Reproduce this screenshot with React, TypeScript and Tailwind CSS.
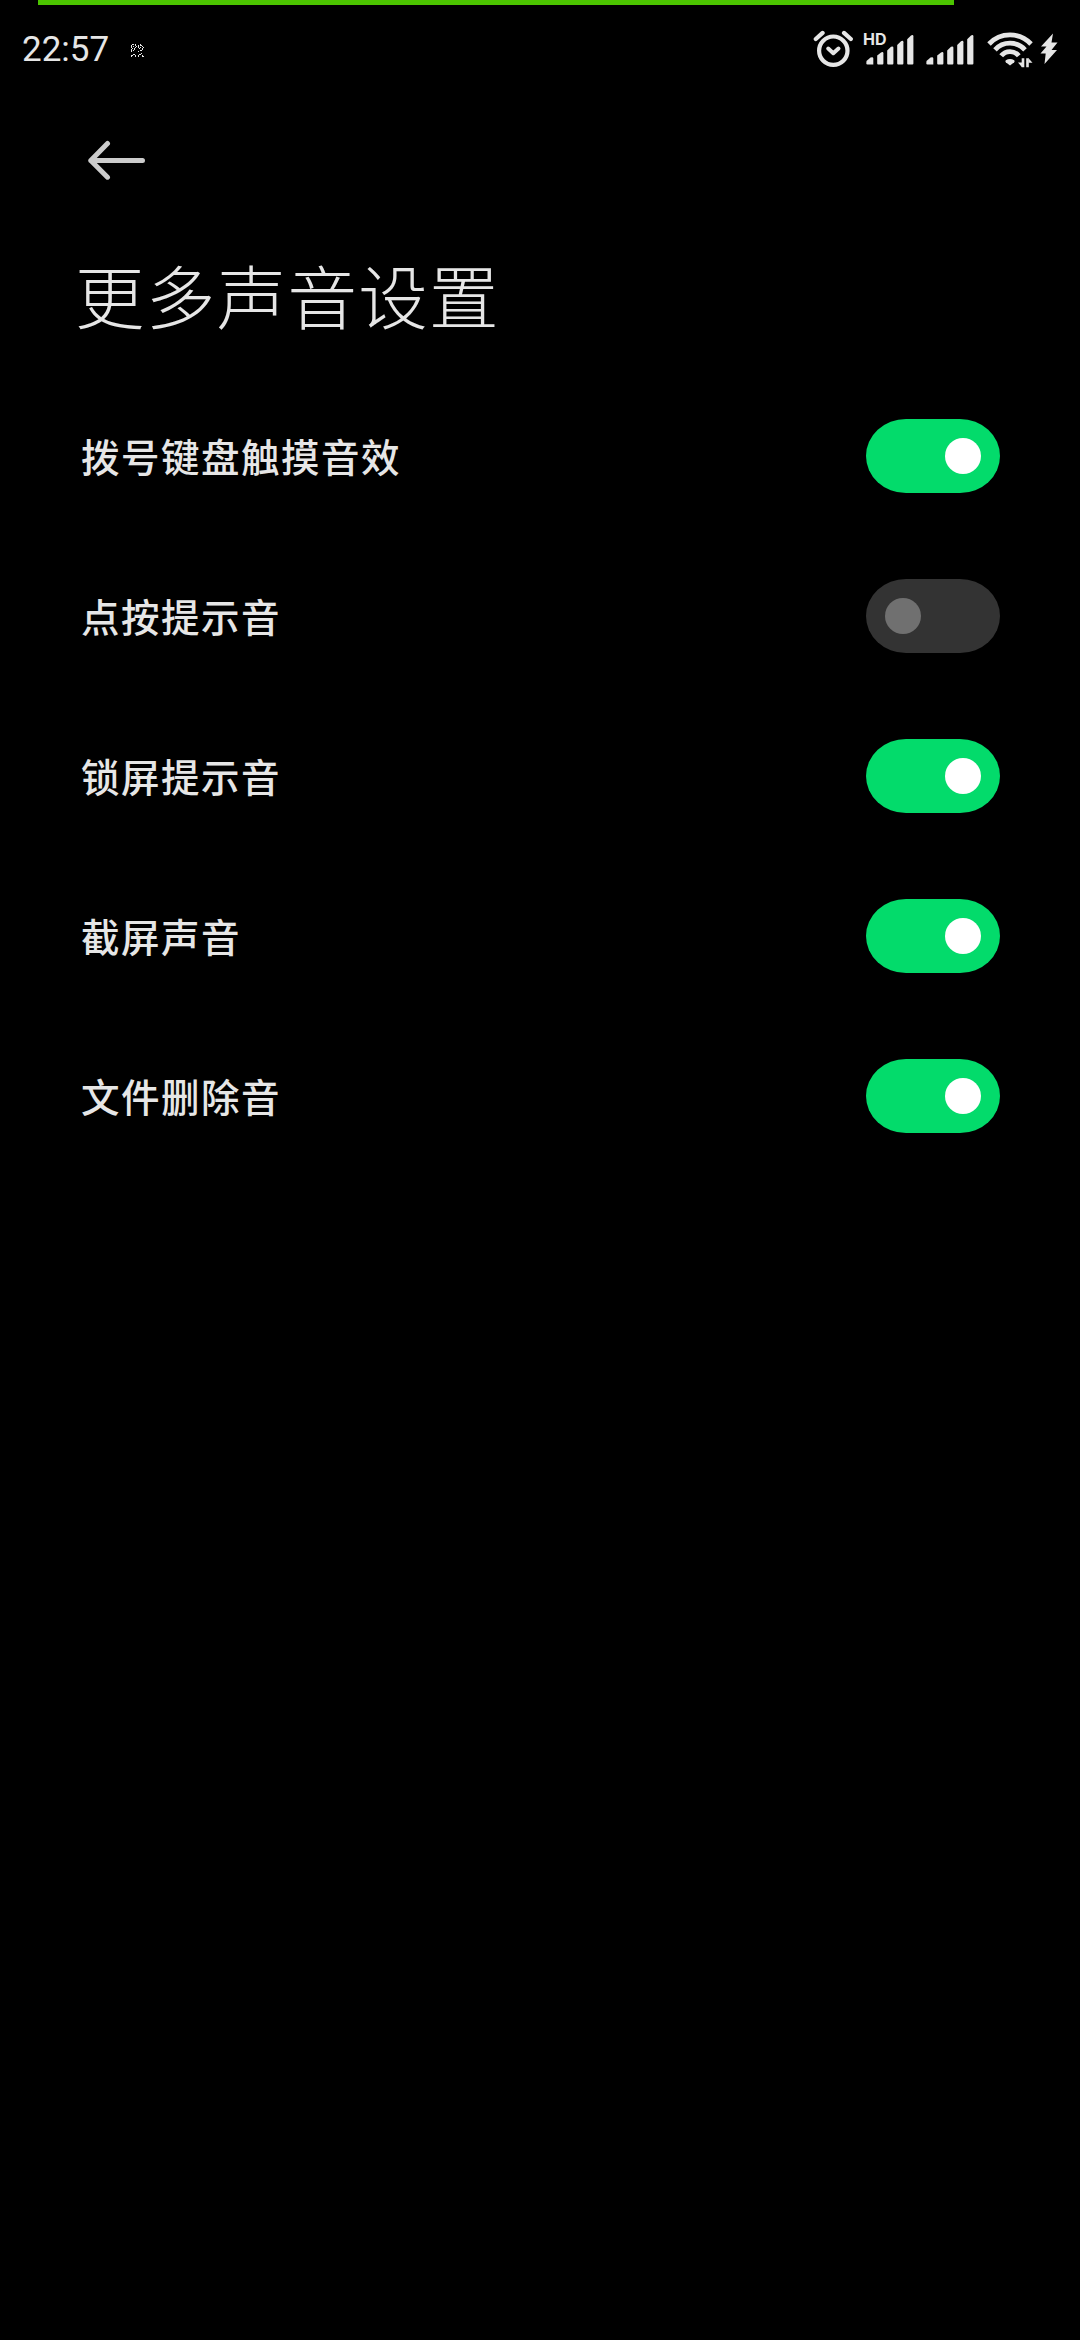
import React, { useState } from 'react';

type SoundOption = {
  id: string;
  label: string;
  enabled: boolean;
};

const INITIAL_OPTIONS: SoundOption[] = [
  { id: 'dialpad', label: '拨号键盘触摸音效', enabled: true },
  { id: 'tap', label: '点按提示音', enabled: false },
  { id: 'lock', label: '锁屏提示音', enabled: true },
  { id: 'screenshot', label: '截屏声音', enabled: true },
  { id: 'delete', label: '文件删除音', enabled: true },
];

// Tiny dotted notification icon next to the clock
const DOT_ROWS = [
  '.##.#....#...',
  '#...#..#.##..',
  '#.#..#.#...#.',
  '#...#..#.#..#',
  '.#.#....#..#.',
  '#..#.......#.',
  '#.#......##..',
  '#......#.....',
  '.............',
  '..........#..',
  '..##....##...',
  '##..#..#...#.',
  '#...#..#...##',
];

const NotificationDots = () => (
  <svg width="13" height="13" viewBox="0 0 13 13" fill="#e6e6e6" shapeRendering="crispEdges">
    {DOT_ROWS.map((row, y) =>
      row.split('').map((cell, x) => (cell === '#' ? <rect key={`${x}-${y}`} x={x} y={y} width="1" height="1" /> : null))
    )}
  </svg>
);

const AlarmIcon = () => (
  <svg width="40" height="38" viewBox="0 0 40 38" fill="none" stroke="#e6e6e6" strokeLinecap="round" strokeLinejoin="round">
    <circle cx="20.3" cy="20.7" r="14.2" strokeWidth="4.2" />
    <path d="M2.8 9L9.6 2.9M31 2.9L37.8 9" strokeWidth="4.2" />
    <path d="M15.2 18.6l5.1 4.6 5.2-4.6" strokeWidth="4" />
  </svg>
);

// Five stepped bars with slanted tops
const SignalIcon = () => (
  <svg width="48" height="31" viewBox="0 0 48 31" fill="#e6e6e6">
    <path d="M.5 27l4-3.4q2.8-1 2.8 1V30.6H1.5Q.3 30.6.3 29.5z" />
    <path d="M11.2 21.6l3.8-3.2q2.4-1 2.4 1V29.6q0 1-1 1h-4.2q-1 0-1-1z" />
    <path d="M21.2 16.6l3.8-3.8q2.4-1 2.4 1V29.6q0 1-1 1h-4.2q-1 0-1-1z" />
    <path d="M31.2 11l3.8-3.8q2.4-1 2.4 1V29.6q0 1-1 1h-4.2q-1 0-1-1z" />
    <path d="M41.2 5.2l3.8-3.8q2.4-1 2.4 1V29.6q0 1-1 1h-4.2q-1 0-1-1z" />
  </svg>
);

const WifiIcon = () => (
  <svg width="46" height="36" viewBox="0 0 46 36" fill="none" stroke="#e6e6e6" strokeWidth="4.8">
    <path d="M2 12a28.8 28.8 0 0 1 42 0" />
    <path d="M8 17.8a20.3 20.3 0 0 1 30 0" />
    <path d="M14.2 23.8a11.2 11.2 0 0 1 17.6 0" />
    <path d="M23 33.6l-4.2-3.4q-1-1 0-1.9 4.2-2.6 8.4 0 1 .9 0 1.9z" fill="#e6e6e6" stroke="none" />
    <path d="M36 26.2v9M40.5 35.2v-9" strokeWidth="2.6" />
    <path d="M31 30.4h4v4.8zM41.5 26.2l4 4.6h-4z" fill="#e6e6e6" stroke="none" />
  </svg>
);

const BoltIcon = () => (
  <svg width="18" height="32" viewBox="0 0 18 32" fill="#e6e6e6">
    <path d="M13 .5L1 13.5h5.5L.5 20.5h5.2L4.5 31 17 17h-5.5l6-7.5h-6z" />
  </svg>
);

const StatusBar = () => (
  <header className="flex h-[100px] items-start justify-between pr-[22px] pl-[22px]">
    <div className="flex items-center pt-[29px]">
      <span className="w-[109px] font-[Roboto] text-[35px] leading-[42px] tracking-[0px] text-[#e6e6e6]">22:57</span>
      <NotificationDots />
    </div>
    <div className="flex items-start">
      <div className="mr-[13px] pt-[30px]">
        <AlarmIcon />
      </div>
      <div className="relative mr-[12px] pt-[34px]">
        <SignalIcon />
        <span className="absolute top-[30px] left-[-3px] font-[Inter] text-[16px] leading-[18px] font-bold text-[#e6e6e6]">HD</span>
      </div>
      <div className="mr-[13px] pt-[34px]">
        <SignalIcon />
      </div>
      <div className="mr-[7px] pt-[32px]">
        <WifiIcon />
      </div>
      <div className="pt-[33px]">
        <BoltIcon />
      </div>
    </div>
  </header>
);

type ToggleProps = {
  checked: boolean;
  label: string;
  onChange: () => void;
};

const Toggle = ({ checked, label, onChange }: ToggleProps) => (
  <button
    role="switch"
    aria-checked={checked}
    aria-label={label}
    onClick={onChange}
    className={`flex h-[74px] w-[134px] items-center rounded-[40px/37px] px-[19px] ${checked ? 'justify-end bg-[#03db6b]' : 'justify-start bg-[#333333]'}`}
  >
    <span className={`size-[36px] rounded-full ${checked ? 'bg-white' : 'bg-[#707070]'}`} />
  </button>
);

export default function App() {
  const [options, setOptions] = useState<SoundOption[]>(INITIAL_OPTIONS);

  const toggleOption = (id: string) => {
    setOptions(options.map(o => (o.id === id ? { ...o, enabled: !o.enabled } : o)));
  };

  return (
    <div className="h-[2340px] w-[1080px] overflow-hidden bg-black font-['Noto_Sans_CJK_SC',sans-serif] text-[#e6e6e6]">
      {/* Progress line along the top edge */}
      <div className="-mb-[5px] ml-[38px] h-[5px] w-[916px] bg-[#4bc400]" />

      <StatusBar />

      <nav className="pt-[40px] pl-[87px]">
        <button aria-label="返回" className="block">
          <svg width="59" height="40" viewBox="0 0 59 40" fill="none" stroke="#cccccc" strokeWidth="5" strokeLinecap="round" strokeLinejoin="round">
            <path d="M20.5 3.5L3.8 20.5l16.7 16.7M3.8 20.5h51.7" />
          </svg>
        </button>
      </nav>

      <h1 className="mt-[64px] pl-[75px] text-[69.5px] leading-[100px] font-light tracking-[1.3px]">更多声音设置</h1>

      <main className="mt-[32px]">
        {options.map(option => (
          <div key={option.id} className="flex h-[160px] items-center justify-between pr-[80px] pl-[81px]">
            <span className="pb-[2px] text-[38.5px] leading-[56px] font-medium tracking-[1.5px]">{option.label}</span>
            <Toggle checked={option.enabled} label={option.label} onChange={() => toggleOption(option.id)} />
          </div>
        ))}
      </main>
    </div>
  );
}
